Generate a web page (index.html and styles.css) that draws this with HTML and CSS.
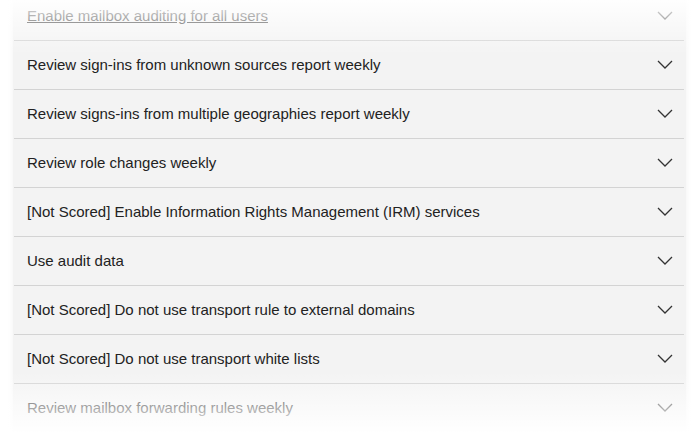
FILE: index.html
```html
<!DOCTYPE html>
<html>
<head>
<meta charset="utf-8">
<link rel="stylesheet" href="styles.css">
</head>
<body>
<div class="page">
  <ul class="list">
    <li class="row"><span class="label link">Enable mailbox auditing for all users</span><svg class="chev" viewBox="0 0 16 9"><polyline points="1,1 8,8 15,1"/></svg></li>
    <li class="row"><span class="label">Review sign-ins from unknown sources report weekly</span><svg class="chev" viewBox="0 0 16 9"><polyline points="1,1 8,8 15,1"/></svg></li>
    <li class="row"><span class="label">Review signs-ins from multiple geographies report weekly</span><svg class="chev" viewBox="0 0 16 9"><polyline points="1,1 8,8 15,1"/></svg></li>
    <li class="row"><span class="label">Review role changes weekly</span><svg class="chev" viewBox="0 0 16 9"><polyline points="1,1 8,8 15,1"/></svg></li>
    <li class="row"><span class="label">[Not Scored] Enable Information Rights Management (IRM) services</span><svg class="chev" viewBox="0 0 16 9"><polyline points="1,1 8,8 15,1"/></svg></li>
    <li class="row"><span class="label">Use audit data</span><svg class="chev" viewBox="0 0 16 9"><polyline points="1,1 8,8 15,1"/></svg></li>
    <li class="row"><span class="label">[Not Scored] Do not use transport rule to external domains</span><svg class="chev" viewBox="0 0 16 9"><polyline points="1,1 8,8 15,1"/></svg></li>
    <li class="row"><span class="label">[Not Scored] Do not use transport white lists</span><svg class="chev" viewBox="0 0 16 9"><polyline points="1,1 8,8 15,1"/></svg></li>
    <li class="row"><span class="label">Review mailbox forwarding rules weekly</span><svg class="chev" viewBox="0 0 16 9"><polyline points="1,1 8,8 15,1"/></svg></li>
  </ul>
  <div class="fade"></div>
</div>
</body>
</html>
```
FILE: styles.css
```css
html, body {
  margin: 0;
  padding: 0;
  background: #ffffff;
  width: 697px;
  height: 432px;
  overflow: hidden;
}
.page {
  position: relative;
  width: 697px;
  height: 432px;
  overflow: hidden;
  font-family: "Liberation Sans", Arial, sans-serif;
}
.list {
  list-style: none;
  margin: -8px 0 0 13px;
  padding: 0;
  width: 673px;
  background: #f3f3f3;
  box-shadow: 0 0 6px rgba(0, 0, 0, 0.06);
}
.row {
  display: flex;
  align-items: center;
  justify-content: space-between;
  box-sizing: border-box;
  height: 49px;
  margin: 0 2px 0 1px;
  padding: 0 11px 2px 13px;
  border-bottom: 1px solid #d3d3d3;
  font-size: 15px;
  color: #222222;
}
.label.link {
  text-decoration: underline;
}
.chev {
  width: 16px;
  height: 9px;
  fill: none;
  stroke: #333333;
  stroke-width: 1.3;
}
.fade {
  position: absolute;
  left: 0;
  top: 0;
  right: 0;
  bottom: 0;
  pointer-events: none;
  background:
    linear-gradient(to bottom, rgba(255,255,255,0.92) 0px, rgba(255,255,255,0.55) 22px, rgba(255,255,255,0) 55px, rgba(255,255,255,0) 372px, rgba(255,255,255,0.6) 408px, rgba(255,255,255,0.97) 432px);
}
```
